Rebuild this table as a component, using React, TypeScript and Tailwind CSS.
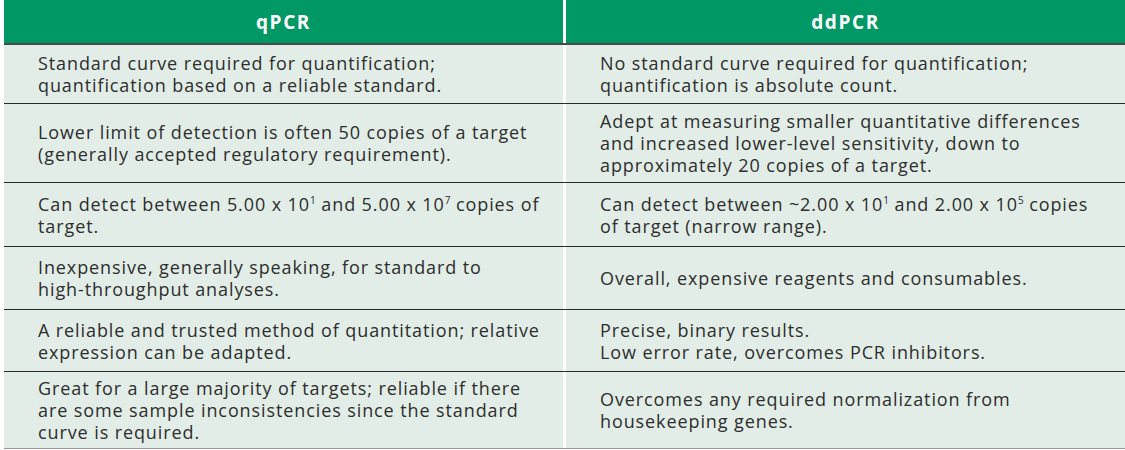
import React from "react";

type Row = { h: string; left: React.ReactNode[]; right: React.ReactNode[] };

const Sup = ({ children }: { children: React.ReactNode }) => (
  <sup className="text-[10px] relative -top-[7px] tracking-normal">{children}</sup>
);

const rows: Row[] = [
  {
    h: "h-[59px]",
    left: ["Standard curve required for quantification;", "quantification based on a reliable standard."],
    right: ["No standard curve required for quantification;", "quantification is absolute count."],
  },
  {
    h: "h-[79px]",
    left: ["Lower limit of detection is often 50 copies of a target", "(generally accepted regulatory requirement)."],
    right: [
      "Adept at measuring smaller quantitative differences",
      "and increased lower-level sensitivity, down to",
      "approximately 20 copies of a target.",
    ],
  },
  {
    h: "h-[64px]",
    left: [
      <>
        Can detect between 5.00 x 10<Sup>1</Sup> and 5.00 x 10<Sup>7</Sup> copies of
      </>,
      "target.",
    ],
    right: [
      <>
        Can detect between ~2.00 x 10<Sup>1</Sup> and 2.00 x 10<Sup>5</Sup> copies
      </>,
      "of target (narrow range).",
    ],
  },
  {
    h: "h-[63px]",
    left: ["Inexpensive, generally speaking, for standard to", "high-throughput analyses."],
    right: ["Overall, expensive reagents and consumables."],
  },
  {
    h: "h-[62px]",
    left: ["A reliable and trusted method of quantitation; relative", "expression can be adapted."],
    right: ["Precise, binary results.", "Low error rate, overcomes PCR inhibitors."],
  },
  {
    h: "h-[77px]",
    left: [
      "Great for a large majority of targets; reliable if there",
      "are some sample inconsistencies since the standard",
      "curve is required.",
    ],
    right: ["Overcomes any required normalization from", "housekeeping genes."],
  },
];

function Cell({ lines }: { lines: React.ReactNode[] }) {
  return (
    <div className="bg-[#e1ede6] flex flex-col justify-center pl-[34px]">
      {lines.map((l, i) => (
        <span key={i} className="whitespace-nowrap">
          {l}
        </span>
      ))}
    </div>
  );
}

export default function App() {
  return (
    <div
      className="w-[1125px] h-[450px] bg-white pl-[4px] text-[#2e2e2e] text-[18px] leading-[22px] tracking-[0.9px]"
      style={{ fontFamily: '"Open Sans", "Liberation Sans", sans-serif' }}
    >
      {/* Header */}
      <div className="grid grid-cols-[559px_559px] gap-x-[3px] h-[45px] border-b-2 border-[#4a4a4a] bg-white">
        <div className="bg-[#009865] flex items-center justify-center text-white text-[19px] font-bold tracking-[1.6px]">qPCR</div>
        <div className="bg-[#009865] flex items-center justify-center text-white text-[19px] font-bold tracking-[1.6px]">ddPCR</div>
      </div>

      {rows.map((r, i) => (
        <div
          key={i}
          className={`grid grid-cols-[559px_559px] gap-x-[3px] bg-white ${r.h} ${
            i === rows.length - 1 ? "border-b border-[#9a9a9a]" : "border-b-[1.5px] border-[#2a2a2a]"
          }`}
        >
          <Cell lines={r.left} />
          <Cell lines={r.right} />
        </div>
      ))}
    </div>
  );
}
